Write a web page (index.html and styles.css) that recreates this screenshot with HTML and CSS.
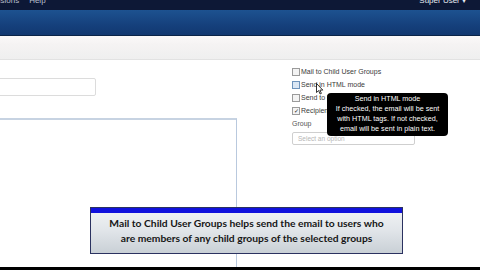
FILE: index.html
```html
<!DOCTYPE html>
<html>
  <head>
    <meta charset="UTF-8">
    <meta name="viewport" content="width=device-width, initial-scale=1.0">
    <title>Mass Mail</title>
    <link rel="stylesheet" href="styles.css">
  </head>
  <body>
    <div class="page">
      <div class="topbar">
        <div class="menu">
          <span>Extensions</span>
          <span>Help</span>
        </div>
        <div class="user">Super User &#9662;</div>
      </div>
      <div class="header"></div>
      <div class="toolbar"></div>

      <div class="main">
        <div class="left-col">
          <div class="subject"></div>
          <div class="editor"></div>
        </div>

        <div class="right-col">
          <div class="check-row"><span class="box"></span>Mail to Child User Groups</div>
          <div class="check-row"><span class="box hover"></span>Send in HTML mode</div>
          <div class="check-row"><span class="box"></span>Send to Disabled Users</div>
          <div class="check-row"><span class="box checked">&#10003;</span>Recipients as BCC</div>
          <div class="group-label">Group</div>
          <div class="select">Select an option</div>
        </div>
      </div>
      <div class="bottom-strip"></div>

      <!-- hover tooltip -->
      <div class="tooltip">
        <div>Send in HTML mode</div>
        <div>If checked, the email will be sent</div>
        <div>with HTML tags. If not checked,</div>
        <div>email will be sent in plain text.</div>
      </div>

      <svg class="cursor" width="8" height="12" viewBox="0 0 8 12">
        <path d="M0.5 0.5 L0.5 9.5 L2.6 7.6 L4.1 11 L5.4 10.4 L3.9 7.1 L6.8 7.1 Z" fill="#fff" stroke="#000" stroke-width="0.8"/>
      </svg>

      <!-- video caption -->
      <div class="caption">
        <div class="caption-bar"></div>
        <div class="caption-text">
          Mail to Child User Groups helps send the email to users who<br>
          are members of any child groups of the selected groups
        </div>
      </div>
    </div>
  </body>
</html>
```

FILE: styles.css
```css
body {
  margin: 0;
  font-family: 'Liberation Sans', Arial, sans-serif;
  background: #fff;
}
.page {
  position: relative;
  width: 480px;
  height: 270px;
  overflow: hidden;
  display: flex;
  flex-direction: column;
}
.topbar {
  height: 10px;
  background: #0d1836;
  display: flex;
  justify-content: space-between;
  color: #b8bfcc;
  font-size: 8px;
  line-height: 8px;
  overflow: hidden;
}
.menu {
  margin-left: -20px;
  margin-top: -3px;
  display: flex;
  gap: 10px;
}
.user {
  margin-top: -3px;
  margin-right: 14px;
  color: #e8ecf2;
}
.header {
  height: 25px;
  background: linear-gradient(#1d5290, #15407c 60%, #123870);
  border-bottom: 1px solid #0b2448;
}
.toolbar {
  height: 23px;
  background: linear-gradient(#fbf9f9, #f5f3f3 35%, #efefef);
  border-bottom: 1px solid #e2e2e2;
}
.main {
  flex: 1;
  display: flex;
}
.left-col {
  width: 237px;
  display: flex;
  flex-direction: column;
}
.subject {
  margin-top: 18px;
  margin-left: -3px;
  width: 97px;
  height: 16px;
  border: 1px solid #dcdcdc;
  border-radius: 2px;
}
.editor {
  flex: 1;
  margin-top: 22px;
  margin-left: -3px;
  border: 1px solid #b9c9de;
  border-top: 2px solid #c7d3e2;
  border-bottom: none;
}
.right-col {
  padding-left: 55px;
  padding-top: 5px;
  font-size: 7px;
  color: #3a3a3a;
}
.check-row {
  height: 13px;
  display: flex;
  align-items: center;
  gap: 1px;
}
.box {
  width: 6px;
  height: 6px;
  border: 1px solid #9a9a9a;
  background: #f3f3f3;
  font-size: 6px;
  line-height: 6px;
  text-align: center;
  color: #222;
}
.box.hover {
  border-color: #6f94bc;
  background: #dbe7f4;
}
.group-label {
  height: 13px;
  line-height: 13px;
  color: #555;
}
.select {
  margin-top: 2px;
  width: 116px;
  height: 11px;
  padding-left: 5px;
  border: 1px solid #cfcfcf;
  border-radius: 2px;
  color: #b5b5b5;
  font-size: 6.5px;
  line-height: 11px;
}
.bottom-strip {
  height: 3px;
  background: #000;
}
.tooltip {
  position: absolute;
  left: 327px;
  top: 93px;
  width: 121px;
  height: 43px;
  padding-top: 1px;
  box-sizing: border-box;
  background: #000;
  border-radius: 4px;
  color: #fff;
  font-size: 7.2px;
  line-height: 10px;
  text-align: center;
}
.cursor {
  position: absolute;
  left: 316px;
  top: 83px;
}
.caption {
  position: absolute;
  left: 90px;
  top: 207px;
  width: 313px;
  height: 47px;
  box-sizing: border-box;
  border: 1px solid #2b3260;
  background: linear-gradient(#f2f4f6, #e1e5e9 50%, #c9d0d6);
}
.caption-bar {
  height: 5px;
  background: #1111dd;
}
.caption-text {
  padding-top: 3px;
  text-align: center;
  font-family: Lato, 'Open Sans', sans-serif;
  font-weight: bold;
  font-size: 10.3px;
  line-height: 15px;
  color: #161616;
}
```
